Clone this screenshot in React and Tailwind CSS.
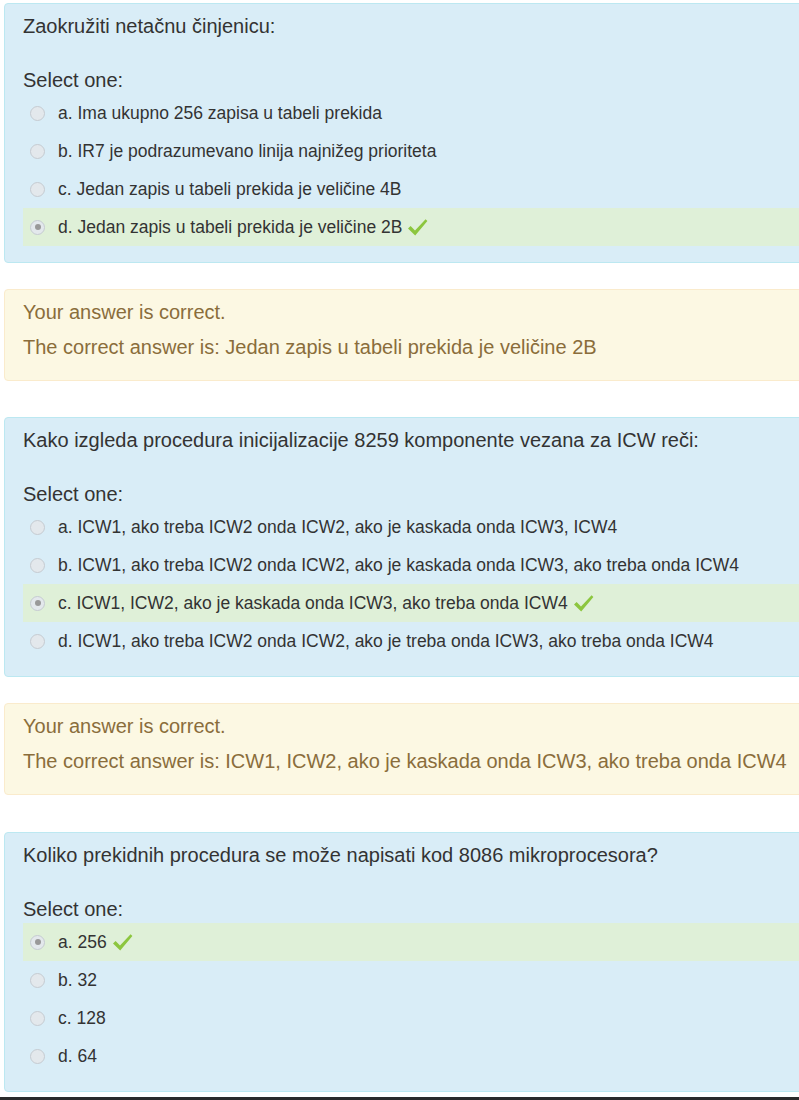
import React from 'react';

const questions = [
  {
    text: 'Zaokružiti netačnu činjenicu:',
    options: [
      'a. Ima ukupno 256 zapisa u tabeli prekida',
      'b. IR7 je podrazumevano linija najnižeg prioriteta',
      'c. Jedan zapis u tabeli prekida je veličine 4B',
      'd. Jedan zapis u tabeli prekida je veličine 2B',
    ],
    selected: 3,
    answer: 'Jedan zapis u tabeli prekida je veličine 2B',
  },
  {
    text: 'Kako izgleda procedura inicijalizacije 8259 komponente vezana za ICW reči:',
    options: [
      'a. ICW1, ako treba ICW2 onda ICW2, ako je kaskada onda ICW3, ICW4',
      'b. ICW1, ako treba ICW2 onda ICW2, ako je kaskada onda ICW3, ako treba onda ICW4',
      'c. ICW1, ICW2, ako je kaskada onda ICW3, ako treba onda ICW4',
      'd. ICW1, ako treba ICW2 onda ICW2, ako je treba onda ICW3, ako treba onda ICW4',
    ],
    selected: 2,
    answer: 'ICW1, ICW2, ako je kaskada onda ICW3, ako treba onda ICW4',
  },
  {
    text: 'Koliko prekidnih procedura se može napisati kod 8086 mikroprocesora?',
    options: ['a. 256', 'b. 32', 'c. 128', 'd. 64'],
    selected: 0,
    answer: null,
  },
];

const Check = () => (
  <svg width="21" height="19" viewBox="0 0 21 19" className="ml-[5px] shrink-0">
    <path d="M1 10.5 L3.6 8 L8 12.6 L18.6 1.2 L20.4 3 L8.2 17.6 Z" fill="#8cc63e" />
  </svg>
);

const Radio = ({ checked }) => (
  <span className="ml-[7px] mr-[13px] flex h-[15px] w-[15px] shrink-0 items-center justify-center rounded-full border border-[#c5cbd1] bg-[#e3e8ec]">
    {checked && <span className="h-[6px] w-[6px] rounded-full bg-[#999]" />}
  </span>
);

const Question = ({ q, className }) => (
  <div className={`w-[840px] rounded-[4px] border border-[#bce8f1] bg-[#d9edf7] pb-[16px] pl-[18px] pt-[8px] ${className || ''}`}>
    <div className="text-[20px] leading-[28px]">{q.text}</div>
    <div className="mt-[26px] text-[20px] leading-[28px]">Select one:</div>
    <div>
      {q.options.map((opt, i) => (
        <div
          key={i}
          className={`flex h-[38px] items-center text-[17.5px] ${i === q.selected ? 'bg-[#dff0d8]' : ''}`}
        >
          <Radio checked={i === q.selected} />
          <span>{opt}</span>
          {i === q.selected && <Check />}
        </div>
      ))}
    </div>
  </div>
);

const Feedback = ({ answer }) => (
  <div className="mt-[26px] w-[840px] rounded-[4px] border border-[#faebcc] bg-[#fcf8e3] pb-[19px] pl-[18px] pt-[8px] text-[20px] leading-[28px] text-[#8a6d3b]">
    <div>Your answer is correct.</div>
    <div className="mt-[7px]">The correct answer is: {answer}</div>
  </div>
);

export default function App() {
  return (
    <div className="h-[1100px] w-[799px] overflow-hidden bg-white font-['Liberation_Sans',Arial,sans-serif] text-[#333]">
      <div className="pl-[4px] pt-[3px]">
        <Question q={questions[0]} />
        <Feedback answer={questions[0].answer} />
        <Question q={questions[1]} className="mt-[36px]" />
        <Feedback answer={questions[1].answer} />
        <Question q={questions[2]} className="mt-[37px]" />
      </div>
      <div className="mt-[5px] h-[10px] bg-[#2b2b2b]" />
    </div>
  );
}
